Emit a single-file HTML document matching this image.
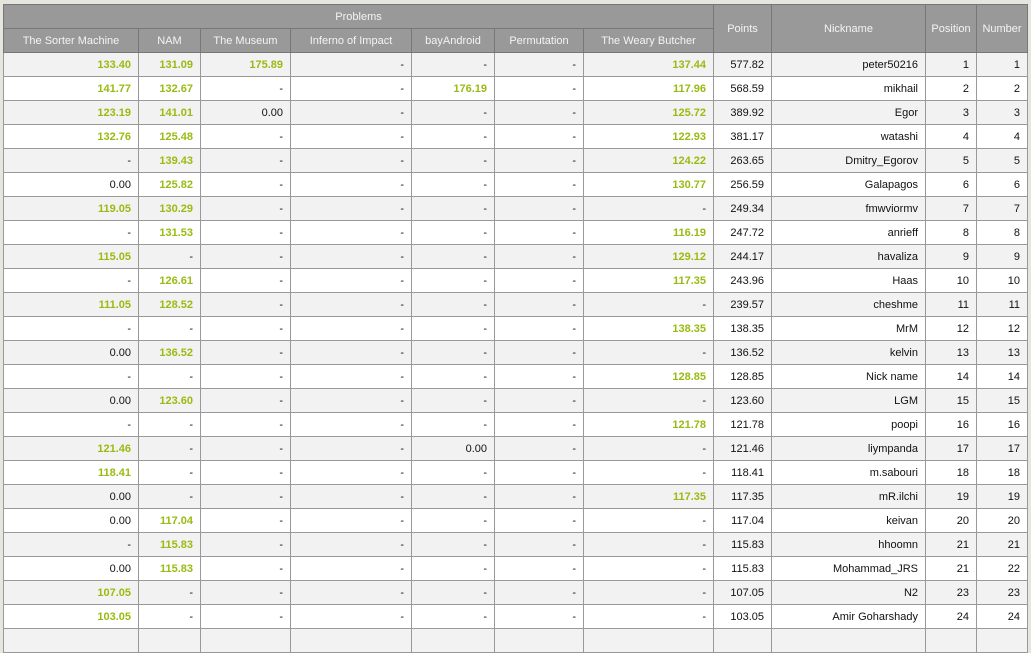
<!DOCTYPE html>
<html><head><meta charset="utf-8"><style>
html,body{margin:0;padding:0;background:#e6e5de;width:1031px;height:632px;overflow:hidden}
table{position:absolute;left:3px;top:4px;border-collapse:collapse;table-layout:fixed;width:1024px;font-family:"Liberation Sans",sans-serif;font-size:11px}
th{background:#999;color:#f4f4f4;font-weight:normal;border:1px solid #777;height:23px;padding:0;text-align:center;white-space:nowrap;overflow:hidden}
td{border:1px solid #999;height:23px;padding:0 7px 0 0;text-align:right;color:#111;white-space:nowrap;overflow:hidden}
tr.g td{background:#f2f2f2}
tr.w td{background:#fff}
td.s{color:#99bb11;font-weight:bold}
</style></head><body>
<table>
<colgroup><col style="width:135px"><col style="width:62px"><col style="width:90px"><col style="width:121px"><col style="width:83px"><col style="width:89px"><col style="width:130px"><col style="width:58px"><col style="width:154px"><col style="width:51px"><col style="width:51px"></colgroup>
<tr><th colspan="7">Problems</th><th rowspan="2">Points</th><th rowspan="2">Nickname</th><th rowspan="2">Position</th><th rowspan="2">Number</th></tr>
<tr><th>The Sorter Machine</th><th>NAM</th><th>The Museum</th><th>Inferno of Impact</th><th>bayAndroid</th><th>Permutation</th><th>The Weary Butcher</th></tr>
<tr class="g"><td class="s">133.40</td><td class="s">131.09</td><td class="s">175.89</td><td>-</td><td>-</td><td>-</td><td class="s">137.44</td><td>577.82</td><td>peter50216</td><td>1</td><td>1</td></tr>
<tr class="w"><td class="s">141.77</td><td class="s">132.67</td><td>-</td><td>-</td><td class="s">176.19</td><td>-</td><td class="s">117.96</td><td>568.59</td><td>mikhail</td><td>2</td><td>2</td></tr>
<tr class="g"><td class="s">123.19</td><td class="s">141.01</td><td>0.00</td><td>-</td><td>-</td><td>-</td><td class="s">125.72</td><td>389.92</td><td>Egor</td><td>3</td><td>3</td></tr>
<tr class="w"><td class="s">132.76</td><td class="s">125.48</td><td>-</td><td>-</td><td>-</td><td>-</td><td class="s">122.93</td><td>381.17</td><td>watashi</td><td>4</td><td>4</td></tr>
<tr class="g"><td>-</td><td class="s">139.43</td><td>-</td><td>-</td><td>-</td><td>-</td><td class="s">124.22</td><td>263.65</td><td>Dmitry_Egorov</td><td>5</td><td>5</td></tr>
<tr class="w"><td>0.00</td><td class="s">125.82</td><td>-</td><td>-</td><td>-</td><td>-</td><td class="s">130.77</td><td>256.59</td><td>Galapagos</td><td>6</td><td>6</td></tr>
<tr class="g"><td class="s">119.05</td><td class="s">130.29</td><td>-</td><td>-</td><td>-</td><td>-</td><td>-</td><td>249.34</td><td>fmwviormv</td><td>7</td><td>7</td></tr>
<tr class="w"><td>-</td><td class="s">131.53</td><td>-</td><td>-</td><td>-</td><td>-</td><td class="s">116.19</td><td>247.72</td><td>anrieff</td><td>8</td><td>8</td></tr>
<tr class="g"><td class="s">115.05</td><td>-</td><td>-</td><td>-</td><td>-</td><td>-</td><td class="s">129.12</td><td>244.17</td><td>havaliza</td><td>9</td><td>9</td></tr>
<tr class="w"><td>-</td><td class="s">126.61</td><td>-</td><td>-</td><td>-</td><td>-</td><td class="s">117.35</td><td>243.96</td><td>Haas</td><td>10</td><td>10</td></tr>
<tr class="g"><td class="s">111.05</td><td class="s">128.52</td><td>-</td><td>-</td><td>-</td><td>-</td><td>-</td><td>239.57</td><td>cheshme</td><td>11</td><td>11</td></tr>
<tr class="w"><td>-</td><td>-</td><td>-</td><td>-</td><td>-</td><td>-</td><td class="s">138.35</td><td>138.35</td><td>MrM</td><td>12</td><td>12</td></tr>
<tr class="g"><td>0.00</td><td class="s">136.52</td><td>-</td><td>-</td><td>-</td><td>-</td><td>-</td><td>136.52</td><td>kelvin</td><td>13</td><td>13</td></tr>
<tr class="w"><td>-</td><td>-</td><td>-</td><td>-</td><td>-</td><td>-</td><td class="s">128.85</td><td>128.85</td><td>Nick name</td><td>14</td><td>14</td></tr>
<tr class="g"><td>0.00</td><td class="s">123.60</td><td>-</td><td>-</td><td>-</td><td>-</td><td>-</td><td>123.60</td><td>LGM</td><td>15</td><td>15</td></tr>
<tr class="w"><td>-</td><td>-</td><td>-</td><td>-</td><td>-</td><td>-</td><td class="s">121.78</td><td>121.78</td><td>poopi</td><td>16</td><td>16</td></tr>
<tr class="g"><td class="s">121.46</td><td>-</td><td>-</td><td>-</td><td>0.00</td><td>-</td><td>-</td><td>121.46</td><td>liympanda</td><td>17</td><td>17</td></tr>
<tr class="w"><td class="s">118.41</td><td>-</td><td>-</td><td>-</td><td>-</td><td>-</td><td>-</td><td>118.41</td><td>m.sabouri</td><td>18</td><td>18</td></tr>
<tr class="g"><td>0.00</td><td>-</td><td>-</td><td>-</td><td>-</td><td>-</td><td class="s">117.35</td><td>117.35</td><td>mR.ilchi</td><td>19</td><td>19</td></tr>
<tr class="w"><td>0.00</td><td class="s">117.04</td><td>-</td><td>-</td><td>-</td><td>-</td><td>-</td><td>117.04</td><td>keivan</td><td>20</td><td>20</td></tr>
<tr class="g"><td>-</td><td class="s">115.83</td><td>-</td><td>-</td><td>-</td><td>-</td><td>-</td><td>115.83</td><td>hhoomn</td><td>21</td><td>21</td></tr>
<tr class="w"><td>0.00</td><td class="s">115.83</td><td>-</td><td>-</td><td>-</td><td>-</td><td>-</td><td>115.83</td><td>Mohammad_JRS</td><td>21</td><td>22</td></tr>
<tr class="g"><td class="s">107.05</td><td>-</td><td>-</td><td>-</td><td>-</td><td>-</td><td>-</td><td>107.05</td><td>N2</td><td>23</td><td>23</td></tr>
<tr class="w"><td class="s">103.05</td><td>-</td><td>-</td><td>-</td><td>-</td><td>-</td><td>-</td><td>103.05</td><td>Amir Goharshady</td><td>24</td><td>24</td></tr>
<tr class="g"><td></td><td></td><td></td><td></td><td></td><td></td><td></td><td></td><td></td><td></td><td></td></tr>
</table>
</body></html>
